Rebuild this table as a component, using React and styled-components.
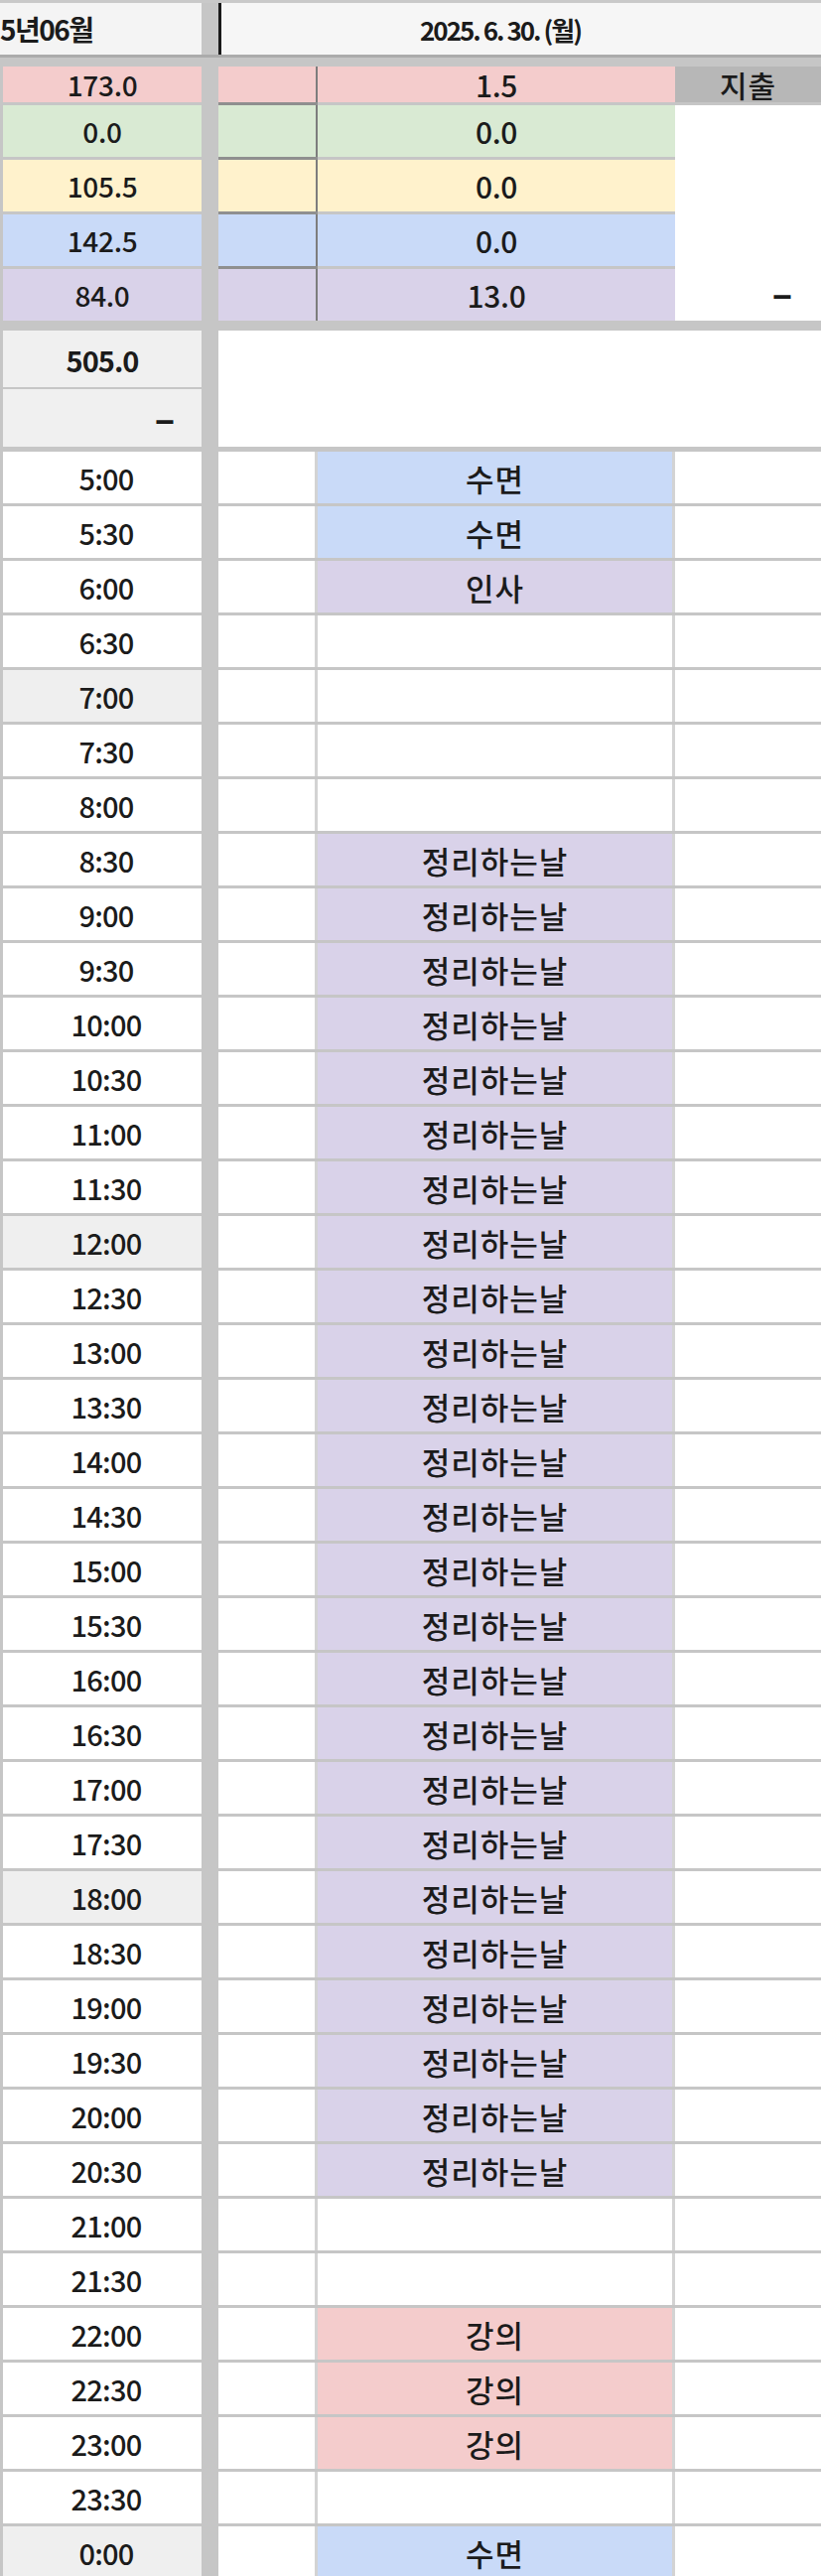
import React from "react";
import styled, { createGlobalStyle } from "styled-components";

const GlobalStyle = createGlobalStyle`
  html, body {
    margin: 0;
    padding: 0;
    background: #ffffff;
  }
  body {
    font-family: "Noto Sans CJK KR", "Noto Sans", sans-serif;
    color: #1b1b1b;
  }
`;

const FILL = {
  red: "#f4cccc",
  green: "#d9ead3",
  yellow: "#fff2cc",
  blue: "#c9daf8",
  purple: "#d9d2e9",
  white: "#ffffff",
};

const COLS = "203px 17px 100px 360px 147px";

const Sheet = styled.div`
  width: 827px;
  height: 2595px;
  overflow: hidden;
  background: #c6c6c6;
  border-top: 3px solid #c9c9c9;
  box-sizing: border-box;
`;

const Header = styled.div`
  display: grid;
  grid-template-columns: 203px 17px 1fr;
  height: 52px;
  border-bottom: 3px solid #ababab;
  margin-bottom: 9px;
`;

const MonthCell = styled.div`
  background: #f4f4f4;
  display: flex;
  align-items: center;
  font-size: 28px;
  font-weight: 700;
  letter-spacing: -1.5px;
`;

const DateCell = styled.div`
  grid-column: 3;
  background: #f6f6f6;
  border-left: 3px solid #1a1a1a;
  display: flex;
  align-items: center;
  justify-content: center;
  padding-right: 42px;
  font-size: 26px;
  font-weight: 700;
  letter-spacing: -2px;
`;

const Summary = styled.div`
  display: grid;
  grid-template-columns: ${COLS};
  grid-template-rows: 36px repeat(4, 52px);
  row-gap: 3px;
`;

const Value = styled.div`
  grid-column: ${(p) => p.$col};
  background: ${(p) => FILL[p.$fill]};
  display: flex;
  align-items: center;
  justify-content: center;
  font-size: ${(p) => (p.$col === 1 ? 28 : 30)}px;
  font-weight: 500;
  line-height: 1;
  letter-spacing: -0.3px;
  ${(p) => (p.$col === 1 ? "border-left: 3px solid #c6c6c6;" : "")}
`;

const SubBox = styled.div`
  grid-column: 3;
  background: ${(p) => FILL[p.$fill]};
  border-right: 2px solid #7d7d7d;
  box-shadow: ${(p) => (p.$first ? "none" : "0 -3px 0 #8f8f8f")};
`;

const Spend = styled.div`
  grid-column: 5;
  grid-row: 1;
  background: #b7b7b7;
  display: flex;
  align-items: center;
  justify-content: center;
  font-size: 30px;
  font-weight: 500;
  line-height: 1;
  letter-spacing: 1px;
`;

const SideBlank = styled.div`
  grid-column: 5;
  grid-row: 2 / span 4;
  background: #ffffff;
  display: flex;
  align-items: flex-end;
  justify-content: flex-end;
  padding: 0 28px 10px 0;
`;

const Dash = styled.span`
  display: inline-block;
  font-size: 30px;
  font-weight: 900;
  line-height: 1.2;
  transform: scaleX(2);
  transform-origin: right center;
`;

const Totals = styled.div`
  display: grid;
  grid-template-columns: 203px 17px 1fr;
  grid-template-rows: 57px 58px;
  row-gap: 2px;
  margin: 10px 0 5px;
`;

const TotalCell = styled.div`
  grid-column: 1;
  background: #f0f0f0;
  border-left: 3px solid #c6c6c6;
  display: flex;
  align-items: center;
  justify-content: ${(p) => (p.$end ? "flex-end" : "center")};
  padding-right: ${(p) => (p.$end ? "28px" : "0")};
  font-size: 29px;
  font-weight: 700;
  letter-spacing: -1px;
`;

const TotalBlank = styled.div`
  grid-column: 3;
  grid-row: 1 / span 2;
  background: #ffffff;
`;

const Slot = styled.div`
  display: grid;
  grid-template-columns: ${COLS};
  height: 52px;
  margin-bottom: 3px;
`;

const TimeCell = styled.div`
  background: ${(p) => (p.$shade ? "#efefef" : "#ffffff")};
  border-left: 3px solid #c6c6c6;
  display: flex;
  align-items: center;
  justify-content: center;
  padding-left: 8px;
  font-size: 29px;
  font-weight: 500;
  letter-spacing: -0.8px;
`;

const EmptyCell = styled.div`
  grid-column: 3;
  background: #ffffff;
  border-right: 3px solid #d3d3d3;
`;

const TaskCell = styled.div`
  background: ${(p) => FILL[p.$fill]};
  border-right: 3px solid #d3d3d3;
  display: flex;
  align-items: center;
  justify-content: center;
  font-size: 31px;
  font-weight: 500;
  letter-spacing: 1px;
`;

const SideCell = styled.div`
  background: #ffffff;
`;

const summaryRows = [
  { fill: "red", left: "173.0", main: "1.5" },
  { fill: "green", left: "0.0", main: "0.0" },
  { fill: "yellow", left: "105.5", main: "0.0" },
  { fill: "blue", left: "142.5", main: "0.0" },
  { fill: "purple", left: "84.0", main: "13.0" },
];

const tasks = {
  "5:00": ["수면", "blue"],
  "5:30": ["수면", "blue"],
  "6:00": ["인사", "purple"],
  "22:00": ["강의", "red"],
  "22:30": ["강의", "red"],
  "23:00": ["강의", "red"],
  "0:00": ["수면", "blue"],
};

const slots = [];
for (let h = 5; h < 24; h++) {
  slots.push(`${h}:00`, `${h}:30`);
}
slots.push("0:00");

const cleanupStart = slots.indexOf("8:30");
const cleanupEnd = slots.indexOf("20:30");
slots.slice(cleanupStart, cleanupEnd + 1).forEach((t) => {
  tasks[t] = ["정리하는날", "purple"];
});

const shaded = ["7:00", "12:00", "18:00", "0:00"];

export default function App() {
  return (
    <>
      <GlobalStyle />
      <Sheet>
        <Header>
          <MonthCell>5년06월</MonthCell>
          <DateCell>2025. 6. 30. (월)</DateCell>
        </Header>

        <Summary>
          {summaryRows.map((r, i) => (
            <React.Fragment key={r.fill}>
              <Value $col={1} $fill={r.fill} style={{ gridRow: i + 1 }}>
                {r.left}
              </Value>
              <SubBox $fill={r.fill} $first={i === 0} style={{ gridRow: i + 1 }} />
              <Value $col={4} $fill={r.fill} style={{ gridRow: i + 1 }}>
                {r.main}
              </Value>
            </React.Fragment>
          ))}
          <Spend>지출</Spend>
          <SideBlank>
            <Dash>-</Dash>
          </SideBlank>
        </Summary>

        <Totals>
          <TotalCell>505.0</TotalCell>
          <TotalCell $end>
            <Dash>-</Dash>
          </TotalCell>
          <TotalBlank />
        </Totals>

        {slots.map((t) => {
          const task = tasks[t];
          return (
            <Slot key={t}>
              <TimeCell $shade={shaded.includes(t)}>{t}</TimeCell>
              <EmptyCell />
              <TaskCell $fill={task ? task[1] : "white"}>
                {task ? task[0] : ""}
              </TaskCell>
              <SideCell />
            </Slot>
          );
        })}
      </Sheet>
    </>
  );
}
